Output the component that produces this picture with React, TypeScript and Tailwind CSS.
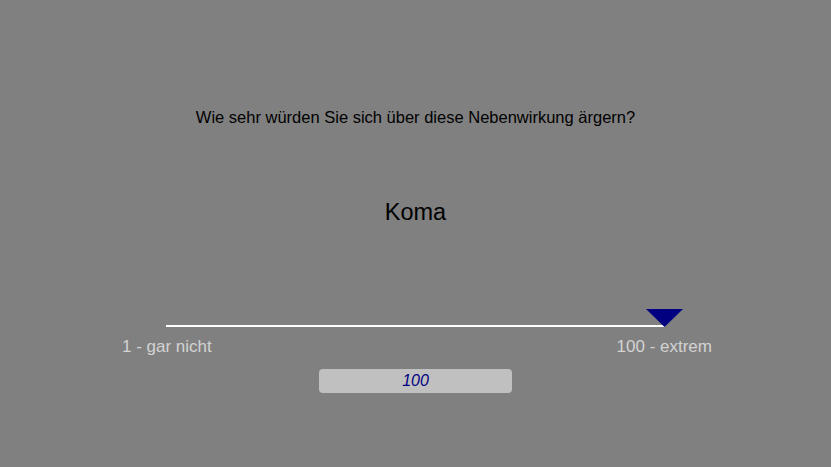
export default function App() {
  return (
    <div
      className="w-full h-[467px] bg-[#808080] flex flex-col items-center overflow-hidden"
      style={{ fontFamily: '"Liberation Sans", Arial, sans-serif' }}
    >
      <p className="mt-[107px] text-[16.5px] leading-[20px] text-black">
        Wie sehr würden Sie sich über diese Nebenwirkung ärgern?
      </p>

      <h1 className="mt-[70px] text-[23.5px] leading-[30px] text-black">Koma</h1>

      <div className="mt-[82px] ml-[3px] w-[590px] flex flex-col">
        <div className="relative h-[20px] ml-[44px] mr-[47px]">
          <div className="absolute left-0 right-0 top-[16px] h-[2px] bg-white" />
          <svg
            className="absolute right-[-18px] top-0"
            width="37"
            height="18"
            viewBox="0 0 37 18"
          >
            <polygon points="0,0 37,0 18.5,18" fill="#000080" />
          </svg>
        </div>
        <div className="flex justify-between mt-[9px] text-[17px] leading-[18px] text-[#d3d3d3]">
          <span>1 - gar nicht</span>
          <span>100 - extrem</span>
        </div>
      </div>

      <div className="mt-[13px] w-[193px] h-[24px] rounded-[4px] bg-[#c0c0c0] flex items-center justify-center text-[16px] italic text-[#000080]">
        100
      </div>
    </div>
  );
}
